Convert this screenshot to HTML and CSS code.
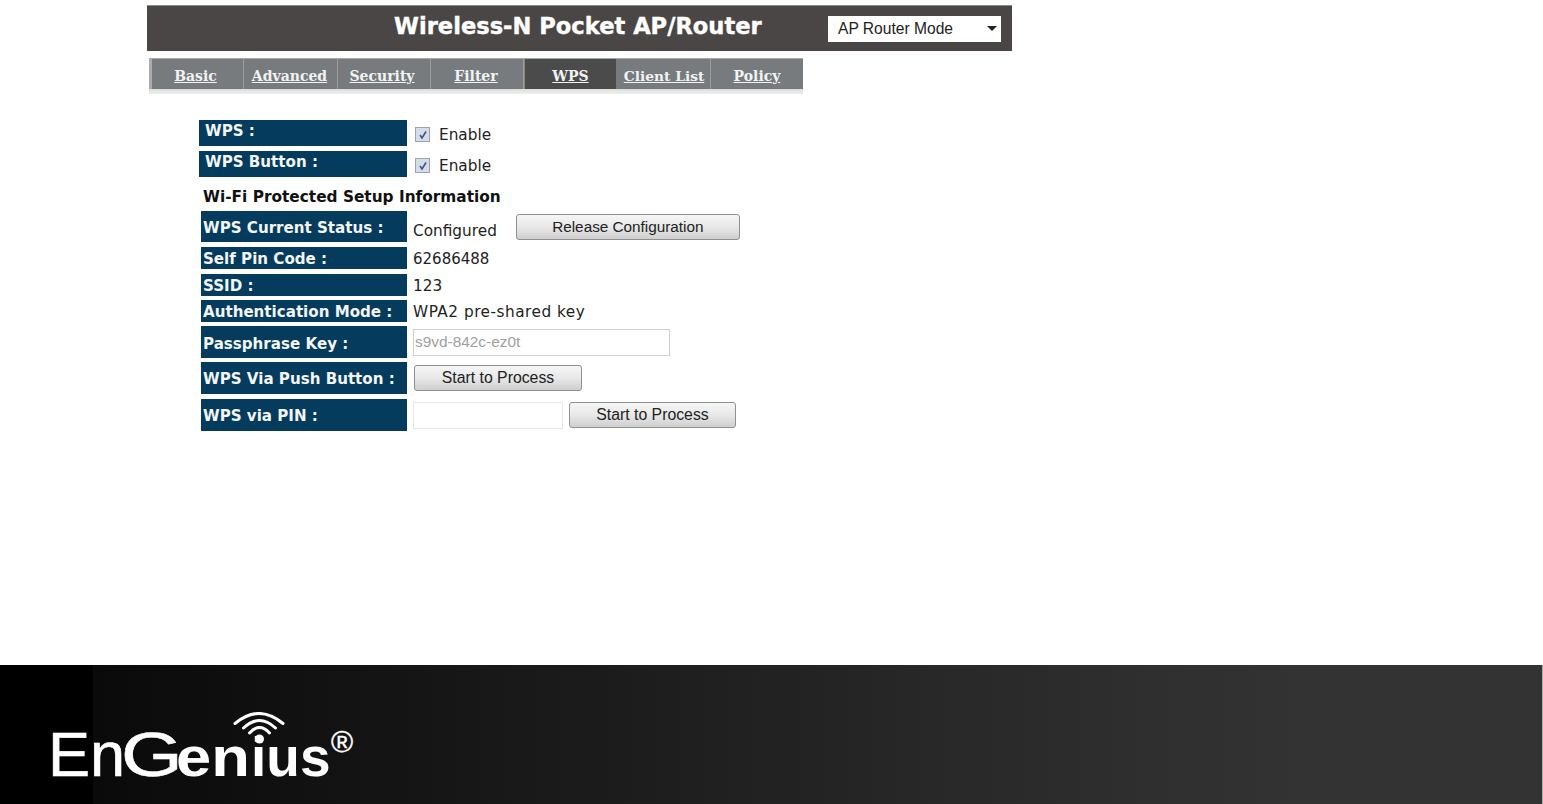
FILE: index.html
```html
<!DOCTYPE html>
<html lang="en">
<head>
    <meta charset="UTF-8">
    <title>Wireless-N Pocket AP/Router</title>
    <link rel="stylesheet" href="styles.css">
</head>
<body>
    <div class="page">
        <div class="main">
            <div class="header">
                <div class="title">Wireless-N Pocket AP/Router</div>
                <div class="mode-select">
                    <span>AP Router Mode</span>
                    <span class="arrow"></span>
                </div>
            </div>

            <div class="tabs-wrap">
                <div class="tabs">
                    <a class="tab tab-basic" href="#">Basic</a>
                    <a class="tab tab-advanced" href="#">Advanced</a>
                    <a class="tab tab-security" href="#">Security</a>
                    <a class="tab tab-filter" href="#">Filter</a>
                    <a class="tab tab-wps active" href="#">WPS</a>
                    <a class="tab tab-client" href="#">Client List</a>
                    <a class="tab tab-policy" href="#">Policy</a>
                </div>
            </div>

            <div class="form">
                <div class="row row-h26">
                    <div class="label label-wide">WPS :</div>
                    <div class="value check-value">
                        <span class="checkbox">
                            <svg width="10" height="10" viewBox="0 0 10 10"><path d="M2 5 L4 8 L8 1.5" fill="none" stroke="#3d5a80" stroke-width="1.6"/></svg>
                        </span>
                        Enable
                    </div>
                </div>
                <div class="row row-h26 gap-5">
                    <div class="label label-wide">WPS Button :</div>
                    <div class="value check-value">
                        <span class="checkbox">
                            <svg width="10" height="10" viewBox="0 0 10 10"><path d="M2 5 L4 8 L8 1.5" fill="none" stroke="#3d5a80" stroke-width="1.6"/></svg>
                        </span>
                        Enable
                    </div>
                </div>
                <div class="section-title">Wi-Fi Protected Setup Information</div>
                <div class="row row-h31">
                    <div class="label">WPS Current Status :</div>
                    <div class="value value-low">Configured</div>
                    <button class="btn btn-release">Release Configuration</button>
                </div>
                <div class="row row-h22 gap-5">
                    <div class="label">Self Pin Code :</div>
                    <div class="value value-num">62686488</div>
                </div>
                <div class="row row-h22 gap-5">
                    <div class="label">SSID :</div>
                    <div class="value">123</div>
                </div>
                <div class="row row-h22 gap-4">
                    <div class="label">Authentication Mode :</div>
                    <div class="value value-wide">WPA2 pre-shared key</div>
                </div>
                <div class="row row-h32 gap-4">
                    <div class="label label-low">Passphrase Key :</div>
                    <input class="text-input input-pass" type="text" value="s9vd-842c-ez0t" disabled>
                </div>
                <div class="row row-h32 gap-4">
                    <div class="label">WPS Via Push Button :</div>
                    <button class="btn btn-push">Start to Process</button>
                </div>
                <div class="row row-h32 gap-5">
                    <div class="label">WPS via PIN :</div>
                    <input class="text-input input-pin" type="text">
                    <button class="btn btn-pin">Start to Process</button>
                </div>
            </div>
        </div>

        <div class="footer">
            <div class="logo">
                <span class="logo-en">En</span>
                <span class="logo-g">G</span>
                <span class="logo-enn">en</span>
                <span class="logo-ius">ius</span>
                <span class="logo-reg">®</span>
                <svg class="logo-wifi" width="52" height="32" viewBox="0 0 52 32">
                    <path d="M2 11.5 Q26 -8.5 50 11.5" fill="none" stroke="#fff" stroke-width="3" stroke-linecap="round"/>
                    <path d="M10.5 16 Q26.5 1 42.5 16" fill="none" stroke="#fff" stroke-width="3" stroke-linecap="round"/>
                    <path d="M16.5 21 Q26.5 10 36.5 21" fill="none" stroke="#fff" stroke-width="3" stroke-linecap="round"/>
                    <circle cx="26.5" cy="27" r="4.5" fill="#fff"/>
                </svg>
            </div>
        </div>
    </div>
</body>
</html>
```

FILE: styles.css
```css
* {
    box-sizing: border-box;
}
body {
    margin: 0;
    background-color: #fff;
    font-family: "DejaVu Sans", sans-serif;
}
.page {
    height: 100vh;
    display: flex;
    flex-direction: column;
    overflow: hidden;
}
.main {
    flex: 1;
    padding: 5px 0 0 147px;
}

/* header */
.header {
    width: 865px;
    height: 46px;
    background-color: #4a4645;
    border-top: 1px solid #8a8886;
    display: flex;
    align-items: center;
    padding-left: 247px;
}
.title {
    width: 434px;
    padding-bottom: 6px;
    color: #fff;
    font-size: 22.6px;
    font-weight: bold;
    -webkit-text-stroke: 0.4px #fff;
    white-space: nowrap;
}
.mode-select {
    width: 173px;
    height: 26px;
    background-color: #fff;
    color: #222;
    font-family: "Liberation Sans", sans-serif;
    font-size: 15.6px;
    display: flex;
    align-items: center;
    justify-content: space-between;
    padding: 0 4px 0 10px;
}
.arrow {
    width: 0;
    height: 0;
    border-left: 5px solid transparent;
    border-right: 5px solid transparent;
    border-top: 5px solid #222;
}

/* tabs */
.tabs-wrap {
    margin: 7px 0 0 2px;
    width: 654px;
    height: 36px;
    background: linear-gradient(#fff 0, #fff 30px, #d8dbd9 30px, #eef0ee 36px);
}
.tabs {
    display: flex;
    height: 31px;
    background-color: #777b7d;
    border-top: 1px solid #a5a8a9;
    border-left: 3px solid #a9acad;
}
.tab {
    display: block;
    text-align: center;
    color: #f1f3f3;
    font-family: "DejaVu Serif", serif;
    font-size: 14px;
    font-weight: bold;
    line-height: 35px;
    height: 30px;
    border-right: 1px solid #9a9d9e;
    white-space: nowrap;
}
.tab-basic { width: 92px; padding-right: 4px; }
.tab-advanced { width: 94px; padding-right: 2px; }
.tab-security { width: 93px; padding-right: 4px; }
.tab-filter { width: 93px; padding-right: 2px; }
.tab-wps { width: 92px; }
.tab-client { width: 95px; padding-left: 2px; font-size: 13.8px; }
.tab-policy { width: 92px; border-right: none; }
.tab.active {
    background-color: #4c4b4c;
    border-right: none;
    border-left: 1px solid #8b8a6f;
}

/* form */
.form {
    margin: 26px 0 0 54px;
    width: 600px;
}
.row {
    display: flex;
    align-items: center;
}
.row-h22 { height: 22px; }
.row-h26 { height: 26px; }
.row-h31 { height: 31px; }
.row-h32 { height: 32px; }
.gap-4 { margin-top: 4px; }
.gap-5 { margin-top: 5px; }
.label {
    width: 206px;
    height: 100%;
    display: flex;
    align-items: center;
    background-color: #053b5c;
    color: #f3f5f6;
    font-size: 15.1px;
    font-weight: bold;
    padding: 2px 0 0 2px;
    white-space: nowrap;
}
.label-wide {
    width: 208px;
    margin-left: -2px;
    padding: 0 0 4px 6px;
}
.label-low {
    padding-top: 3px;
}
.value {
    margin-left: 6px;
    padding-top: 2px;
    color: #222;
    font-size: 15.3px;
    white-space: nowrap;
}
.value-low {
    margin-top: 7px;
}
.value-num {
    font-size: 15px;
}
.value-wide {
    letter-spacing: 0.5px;
}
.check-value {
    display: flex;
    align-items: center;
    margin: 1px 0 0 8px;
}
.checkbox {
    width: 15px;
    height: 15px;
    margin-right: 9px;
    border: 1px solid #9aa3b0;
    background-color: #d6dce8;
    display: flex;
    align-items: center;
    justify-content: center;
}
.section-title {
    height: 34px;
    margin-left: 2px;
    padding-top: 11px;
    color: #111;
    font-size: 15.35px;
    font-weight: bold;
    white-space: nowrap;
}
.btn {
    height: 26px;
    padding: 0;
    border: 1px solid #8f9090;
    border-radius: 3px;
    background: linear-gradient(#f6f6f6, #e8e8e8 50%, #cfcfcf);
    color: #222;
    font-family: "Liberation Sans", sans-serif;
    font-size: 15.8px;
}
.btn-release {
    width: 224px;
    margin-left: 19px;
    font-size: 15.3px;
}
.btn-push {
    width: 168px;
    margin-left: 7px;
}
.btn-pin {
    width: 167px;
    margin-left: 6px;
}
.text-input {
    height: 27px;
    margin-left: 6px;
    padding: 0 1px;
    border: 1px solid #cfcfcf;
    background-color: #fff;
    font-family: "Liberation Sans", sans-serif;
    font-size: 15.4px;
    color: #a0a0a0;
}
.input-pass {
    width: 257px;
}
.input-pin {
    width: 150px;
    border-color: #e6e6e6;
}

/* footer */
.footer {
    height: 139px;
    margin-right: 1px;
    background: linear-gradient(90deg, #000 0, #000 93px, #0a0a0a 93px, #181818 500px, #2a2a2a 1000px, #333 1300px, #333 100%);
    box-shadow: 1px 0 0 #aaa;
    padding: 54px 0 0 48px;
}
.logo {
    position: relative;
    display: flex;
    align-items: baseline;
    height: 70px;
    color: #fff;
    font-family: "Liberation Sans", sans-serif;
    line-height: 70px;
    white-space: nowrap;
}
.logo span {
    display: block;
    transform-origin: left center;
}
.logo-en {
    width: 73px;
    font-size: 63px;
    -webkit-text-stroke: 0.6px #fff;
}
.logo-g {
    width: 55px;
    font-size: 63px;
    -webkit-text-stroke: 0.6px #fff;
    transform: scaleX(1.26);
}
.logo-enn {
    width: 75px;
    font-size: 55px;
    font-weight: bold;
    transform: scaleX(1.15);
}
.logo-ius {
    width: 80px;
    font-size: 55px;
    font-weight: bold;
}
.logo-reg {
    font-size: 30px;
    -webkit-text-stroke: 0.4px #fff;
    position: relative;
    top: -24px;
}
.logo-wifi {
    position: absolute;
    left: 185px;
    top: -7px;
}
```
